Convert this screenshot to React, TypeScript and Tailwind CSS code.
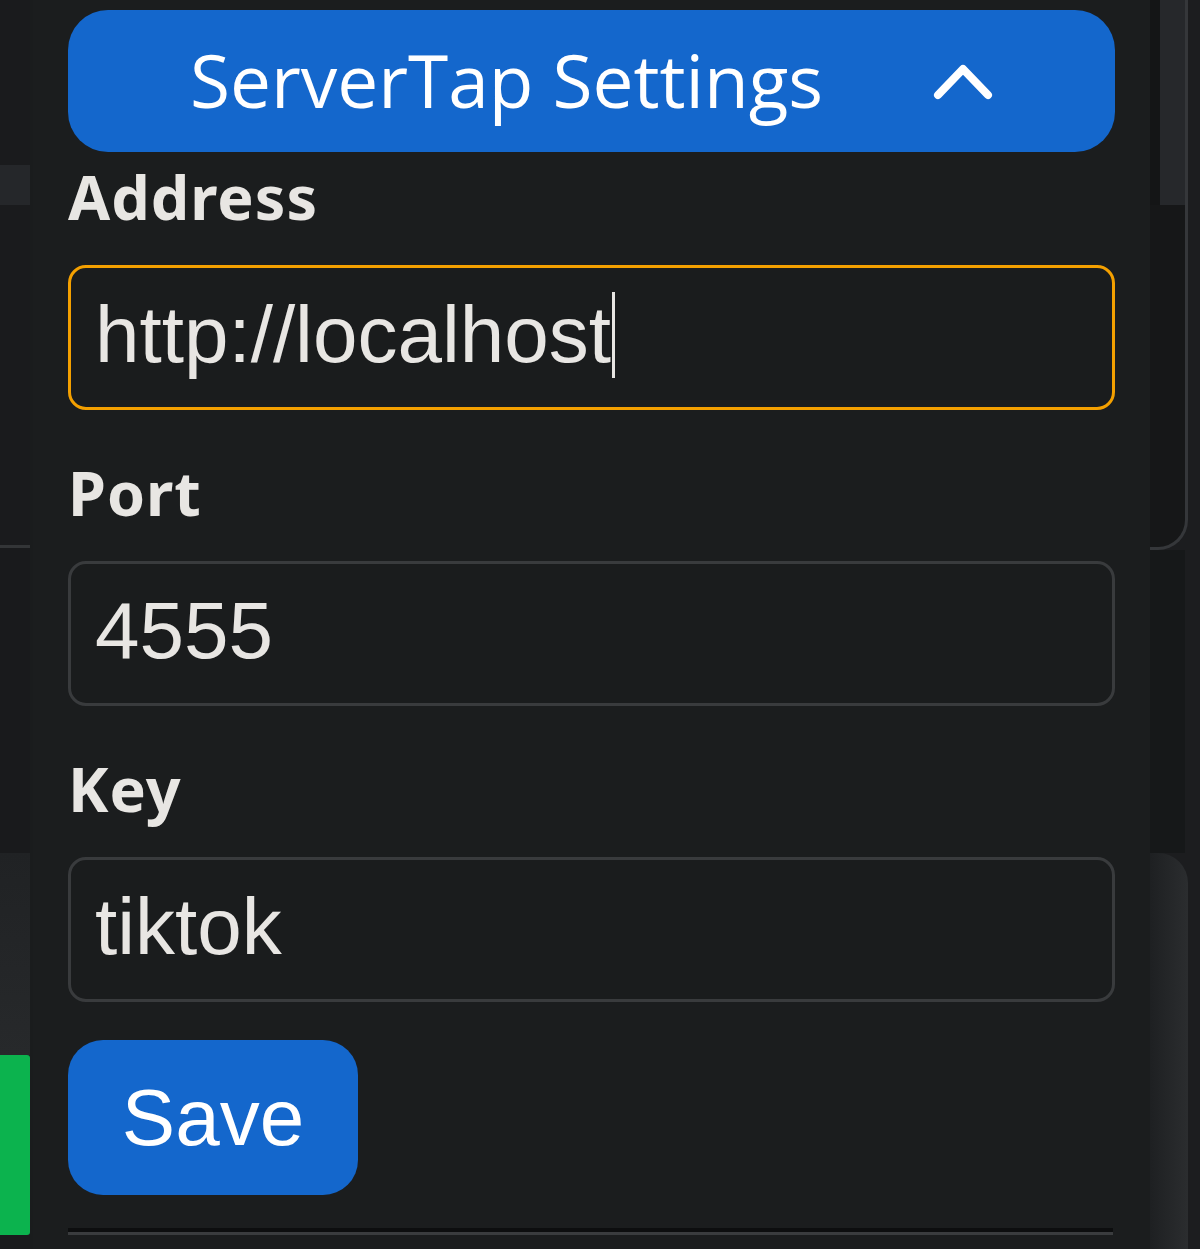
import { useState } from 'react';

function ChevronUp() {
  return (
    <svg width="60" height="38" viewBox="0 0 60 38" fill="none" className="shrink-0">
      <polyline
        points="5,33 30,7 55,33"
        stroke="white"
        strokeWidth="8"
        strokeLinecap="round"
        strokeLinejoin="round"
      />
    </svg>
  );
}

function Field({
  label,
  value,
  focused = false,
  first = false,
}: {
  label: string;
  value: string;
  focused?: boolean;
  first?: boolean;
}) {
  return (
    <div className={first ? '' : 'mt-[38px]'}>
      <div className="pt-[10px] pb-[33px] font-['Noto_Sans',sans-serif] text-[61px] font-bold leading-[70px] tracking-[1px] text-[#e8e6e3]">
        {label}
      </div>
      <div
        className={
          'flex h-[145px] items-center rounded-[18px] border-[3px] bg-[#1a1c1d] pb-[6px] pl-[24px] font-[Liberation_Sans,Arial,sans-serif] text-[80px] text-[#e8e6e3] ' +
          (focused ? 'border-[#f4a000]' : 'border-[#393b3d]')
        }
      >
        <span>{value}</span>
        {focused ? <span className="ml-[1px] h-[86px] w-[3px] bg-[#e8e6e3]" /> : null}
      </div>
    </div>
  );
}

export default function App() {
  const [open] = useState(true);

  return (
    <div className="flex h-[1249px] w-[1200px] overflow-hidden bg-[#1a1c1d]">
      {/* page behind, left edge */}
      <div className="flex w-[33px] shrink-0 flex-col">
        <div className="h-[165px] w-[30px] bg-[#1a1b1d]" />
        <div className="h-[40px] w-[30px] bg-[#25272a]" />
        <div className="h-[340px] w-[30px] bg-[#1a1b1d]" />
        <div className="h-[3px] w-[30px] bg-[#333537]" />
        <div className="h-[305px] w-[30px] bg-[#191a1c]" />
        <div className="h-[202px] w-[30px] bg-gradient-to-b from-[#202224] to-[#27292b]" />
        <div className="h-[180px] w-[30px] rounded-r-[3px] bg-[#0cb34e]" />
        <div className="flex-1 w-[30px] bg-[#1a1b1d]" />
      </div>

      {/* settings panel */}
      <div className="flex w-[1117px] shrink-0 flex-col bg-[#1b1d1e] px-[35px] pt-[10px]">
        <button className="flex h-[142px] w-full items-center justify-center gap-[110px] rounded-[40px] bg-[#1467cc] font-['Open_Sans',sans-serif] text-[73px] leading-none text-white">
          <span className="pb-[4px]">ServerTap Settings</span>
          {open ? <ChevronUp /> : null}
        </button>

        <Field label="Address" value="http://localhost" focused first />
        <Field label="Port" value="4555" />
        <Field label="Key" value="tiktok" />

        <button className="mt-[38px] flex h-[155px] w-[290px] items-center justify-center rounded-[35px] bg-[#1467cc] font-[Liberation_Sans,Arial,sans-serif] text-[80px] text-white">
          Save
        </button>

        <div className="mt-[33px] h-[7px] w-[1045px] border-t-[4px] border-b-[3px] border-t-[#0d0e0f] border-b-[#3a3c3e]" />
      </div>

      {/* page behind, right edge */}
      <div className="flex w-[50px] shrink-0 flex-col bg-[#1c1d1f]">
        <div className="flex h-[550px] w-[38px] flex-col overflow-hidden rounded-br-[30px] border-r-[3px] border-b-[3px] border-[#35373a] bg-[#161718]">
          <div className="h-[205px] border-l-[10px] border-[#141516] bg-[#26282b]" />
        </div>
        <div className="h-[303px] w-[35px] bg-[#161819]" />
        <div className="flex-1 w-[38px] rounded-tr-[30px] bg-gradient-to-r from-[#1e2022] to-[#2b2d2f]" />
      </div>
    </div>
  );
}
